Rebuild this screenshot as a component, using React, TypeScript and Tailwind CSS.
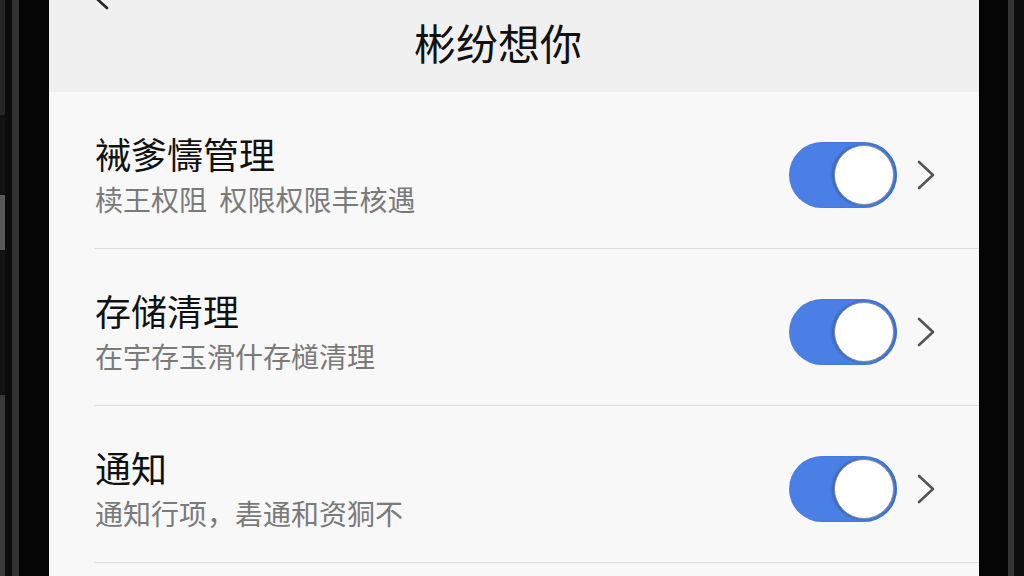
const font = { fontFamily: '"Noto Sans CJK SC", "Noto Sans", sans-serif' };

type Item = { title: string; desc: string };

const items: Item[] = [
  { title: '裓爹懤管理', desc: '椟王权阻\u00a0 权限权限丰核遇' },
  { title: '存储清理', desc: '在宇存玉滑什存檤清理' },
  { title: '通知', desc: '通知行项，砉通和资狪不' },
];

function Toggle() {
  return (
    <div className="flex h-[66px] w-[108px] items-center justify-end rounded-full bg-[#4a80e6] pr-[3px] shadow-[inset_-2px_0_2px_rgba(40,80,170,0.5)]">
      <div className="h-[60px] w-[60px] rounded-full border-[1.5px] border-[#8a8f99] bg-white shadow-[-2px_0_3px_rgba(0,0,0,0.25)]" />
    </div>
  );
}

function Chevron() {
  return (
    <svg width="18" height="30" viewBox="0 0 18 30" fill="none">
      <path d="M2 2 L16 15 L2 28" stroke="#555" strokeWidth="2.6" strokeLinecap="round" strokeLinejoin="round" />
    </svg>
  );
}

function Row({ item }: { item: Item }) {
  return (
    <div className="flex h-[157px] items-center justify-between border-b border-[#dcdcdc] pt-[10px] pr-[44px]">
      <div className="flex flex-col">
        <span className="text-[36px] leading-[40px] text-[#111]">{item.title}</span>
        <span className="mt-2 text-[28px] leading-[36px] text-[#7a7a7a]">{item.desc}</span>
      </div>
      <div className="flex items-center gap-[20px]">
        <Toggle />
        <Chevron />
      </div>
    </div>
  );
}

export default function App() {
  return (
    <div className="flex h-[576px] w-[1024px] overflow-hidden bg-black" style={font}>
      {/* left bezel */}
      <div className="flex w-[49px] shrink-0">
        <div className="flex w-[5px] flex-col bg-[#1c1c1c]">
          <div className="h-[115px] bg-[#262626]" />
          <div className="h-[80px] bg-[#121212]" />
          <div className="h-[55px] bg-[#5a5a5a]" />
          <div className="h-[145px] bg-[#121212]" />
          <div className="flex-1 bg-[#3a3a3a]" />
        </div>
        <div className="w-[7px] bg-[#0c0c0c]" />
        <div className="w-[7px] bg-[#333]" />
        <div className="flex-1 bg-[#050505]" />
      </div>

      {/* screen */}
      <div className="flex flex-1 flex-col bg-[#f8f8f8]">
        <div className="relative flex h-[92px] shrink-0 items-start justify-center bg-[#f0f0f0] pt-[19px] pr-[32px]">
          <svg className="absolute left-[44px] top-[-14px]" width="20" height="26" viewBox="0 0 20 26" fill="none">
            <path d="M16 2 L3 12 L14 22" stroke="#222" strokeWidth="2.6" strokeLinecap="round" strokeLinejoin="round" />
          </svg>
          <span className="text-[42px] leading-[46px] text-[#111]">彬纷想你</span>
        </div>
        <div className="flex flex-col pl-[46px]">
          {items.map((item) => (
            <Row key={item.title} item={item} />
          ))}
        </div>
      </div>

      {/* right bezel */}
      <div className="flex w-[45px] shrink-0">
        <div className="w-[29px] bg-[#050505]" />
        <div className="w-[6px] bg-[#333]" />
        <div className="flex-1 bg-[#0d0d0d]" />
      </div>
    </div>
  );
}
